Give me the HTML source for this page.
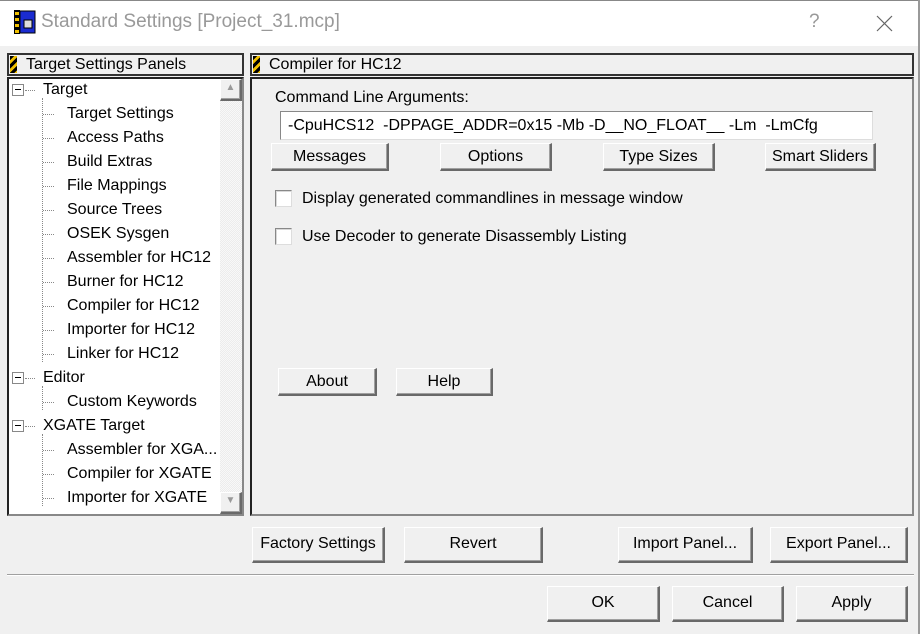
<!DOCTYPE html>
<html><head><meta charset="utf-8"><style>
*{margin:0;padding:0;box-sizing:border-box}
body{width:920px;height:634px;background:#f0f0f0;font-family:"Liberation Sans",sans-serif;font-size:16px;color:#000;position:relative;overflow:hidden}
.a{position:absolute;white-space:nowrap}
.btn{position:absolute;background:#f0f0f0;border-top:1px solid #fff;border-left:1px solid #fff;border-right:2px solid #696969;border-bottom:2px solid #696969;box-shadow:inset -1px -1px 0 #a0a0a0;text-align:center;line-height:30px}
.hdr{position:absolute;background:#f0f0f0;border:2px solid #333;height:23px;line-height:19px;padding-left:17px}
.ico{position:absolute;left:1px;top:1px;width:7px;height:17px;background:repeating-linear-gradient(135deg,#000 0 3px,#f0c000 3px 6px)}
.box{position:absolute;border:2px solid #222;border-right-color:#888;border-bottom-color:#888}
.tr{position:absolute;left:0;height:24px;line-height:24px}
.cb{position:absolute;width:17px;height:17px;background:#fff;border:1px solid #888;border-right-color:#ddd;border-bottom-color:#ddd;box-shadow:inset 1px 1px 0 #d8d8d8}
.pm{position:absolute;width:12px;height:12px;border:1px solid #888;background:#fff}
.pm:after{content:"";position:absolute;left:2px;top:4px;width:6px;height:1px;background:#000}
.st{position:absolute;left:43px;width:12px;background:repeating-linear-gradient(180deg,transparent 0 12px,#888 12px 13px,transparent 13px 24px);-webkit-mask:repeating-linear-gradient(90deg,#000 0 1px,transparent 1px 2px)}
</style></head><body>
<div class="a" style="left:0;top:0;width:920px;height:46px;background:#fff;border-top:1px solid #888"></div>
<div class="a" style="left:918px;top:0;width:2px;height:634px;background:#999"></div>
<svg class="a" style="left:14px;top:10px" width="22" height="24"><rect x="0" y="0" width="6" height="24" fill="#000"/><rect x="1" y="2" width="4" height="3" fill="#f0c000"/><rect x="1" y="8" width="4" height="3" fill="#f0c000"/><rect x="1" y="14" width="4" height="3" fill="#f0c000"/><rect x="1" y="20" width="4" height="3" fill="#f0c000"/><rect x="6" y="1" width="15" height="22" fill="#1a2bd0" stroke="#000"/><rect x="10" y="10" width="8" height="8" fill="#ddd" stroke="#000"/></svg>
<div class="a" style="left:41px;top:11px;font-size:19px;color:#999">Standard Settings [Project_31.mcp]</div>
<div class="a" style="left:809px;top:11px;font-size:19px;color:#999">?</div>
<svg class="a" style="left:876px;top:15px" width="17" height="17"><path d="M1 1L16 16M16 1L1 16" stroke="#666" stroke-width="1.2"/></svg>

<div class="hdr" style="left:7px;top:53px;width:237px"><div class="ico"></div>Target Settings Panels</div>
<div class="hdr" style="left:250px;top:53px;width:664px"><div class="ico"></div>Compiler for HC12</div>

<div class="box" style="left:7px;top:77px;width:237px;height:439px;background:#fff">
 <div class="a" style="left:211px;top:0;width:22px;height:435px;background:repeating-conic-gradient(#f8f8f8 0 25%,#ececec 0 50%) 0 0/2px 2px"></div>
 <div class="btn" style="left:211px;top:0;width:22px;height:22px;line-height:16px;font-size:10px;color:#999">▲</div>
 <div class="btn" style="left:211px;top:413px;width:22px;height:22px;line-height:16px;font-size:10px;color:#999">▼</div>
 <div class="a" style="left:33px;top:19px;width:1px;height:264px;border-left:1px dotted #888"></div>
 <div class="a" style="left:33px;top:307px;width:1px;height:24px;border-left:1px dotted #888"></div>
 <div class="a" style="left:33px;top:355px;width:1px;height:72px;border-left:1px dotted #888"></div>
</div>

<div class="box" style="left:250px;top:77px;width:664px;height:439px"></div>
<div class="a" style="left:275px;top:89px">Command Line Arguments:</div>
<div class="a" style="left:280px;top:111px;width:593px;height:29px;background:#fff;border:1px solid #888;border-right-color:#ddd;border-bottom-color:#ddd;padding-left:7px;line-height:27px">-CpuHCS12&nbsp; -DPPAGE_ADDR=0x15 -Mb -D__NO_FLOAT__ -Lm&nbsp; -LmCfg</div>
<div class="btn" style="left:271px;top:143px;width:118px;height:28px;line-height:25px">Messages</div>
<div class="btn" style="left:440px;top:143px;width:112px;height:28px;line-height:25px">Options</div>
<div class="btn" style="left:603px;top:143px;width:112px;height:28px;line-height:25px">Type Sizes</div>
<div class="btn" style="left:765px;top:143px;width:111px;height:28px;line-height:25px">Smart Sliders</div>
<div class="cb" style="left:275px;top:190px"></div>
<div class="a" style="left:302px;top:190px">Display generated commandlines in message window</div>
<div class="cb" style="left:275px;top:228px"></div>
<div class="a" style="left:302px;top:228px">Use Decoder to generate Disassembly Listing</div>
<div class="btn" style="left:278px;top:368px;width:99px;height:28px;line-height:25px">About</div>
<div class="btn" style="left:396px;top:368px;width:97px;height:28px;line-height:25px">Help</div>

<div class="btn" style="left:252px;top:527px;width:133px;height:36px;line-height:32px">Factory Settings</div>
<div class="btn" style="left:404px;top:527px;width:139px;height:36px;line-height:32px">Revert</div>
<div class="btn" style="left:618px;top:527px;width:135px;height:36px;line-height:32px">Import Panel...</div>
<div class="btn" style="left:770px;top:527px;width:138px;height:36px;line-height:32px">Export Panel...</div>
<div class="a" style="left:7px;top:574px;width:907px;height:2px;border-top:1px solid #a0a0a0;border-bottom:1px solid #fff"></div>
<div class="btn" style="left:547px;top:586px;width:113px;height:36px;line-height:32px">OK</div>
<div class="btn" style="left:672px;top:586px;width:112px;height:36px;line-height:32px">Cancel</div>
<div class="btn" style="left:796px;top:586px;width:112px;height:36px;line-height:32px">Apply</div>

<div class="a" style="left:9px;top:79px">
 <div class="pm" style="left:3px;top:5px"></div><div class="a" style="left:16px;top:11px;width:10px;border-top:1px dotted #888"></div><div class="tr" style="left:34px;top:-1px">Target</div>
 <div class="tr" style="left:58px;top:23px">Target Settings</div>
 <div class="tr" style="left:58px;top:47px">Access Paths</div>
 <div class="tr" style="left:58px;top:71px">Build Extras</div>
 <div class="tr" style="left:58px;top:95px">File Mappings</div>
 <div class="tr" style="left:58px;top:119px">Source Trees</div>
 <div class="tr" style="left:58px;top:143px">OSEK Sysgen</div>
 <div class="tr" style="left:58px;top:167px">Assembler for HC12</div>
 <div class="tr" style="left:58px;top:191px">Burner for HC12</div>
 <div class="tr" style="left:58px;top:215px">Compiler for HC12</div>
 <div class="tr" style="left:58px;top:239px">Importer for HC12</div>
 <div class="tr" style="left:58px;top:263px">Linker for HC12</div>
 <div class="pm" style="left:3px;top:293px"></div><div class="a" style="left:16px;top:299px;width:10px;border-top:1px dotted #888"></div><div class="tr" style="left:34px;top:287px">Editor</div>
 <div class="tr" style="left:58px;top:311px">Custom Keywords</div>
 <div class="pm" style="left:3px;top:341px"></div><div class="a" style="left:16px;top:347px;width:10px;border-top:1px dotted #888"></div><div class="tr" style="left:34px;top:335px">XGATE Target</div>
 <div class="tr" style="left:58px;top:359px">Assembler for XGA...</div>
 <div class="tr" style="left:58px;top:383px">Compiler for XGATE</div>
 <div class="tr" style="left:58px;top:407px">Importer for XGATE</div>
</div>
<div class="st" style="top:102px;height:264px"></div>
<div class="st" style="top:390px;height:24px"></div>
<div class="st" style="top:438px;height:72px"></div>
</body></html>
